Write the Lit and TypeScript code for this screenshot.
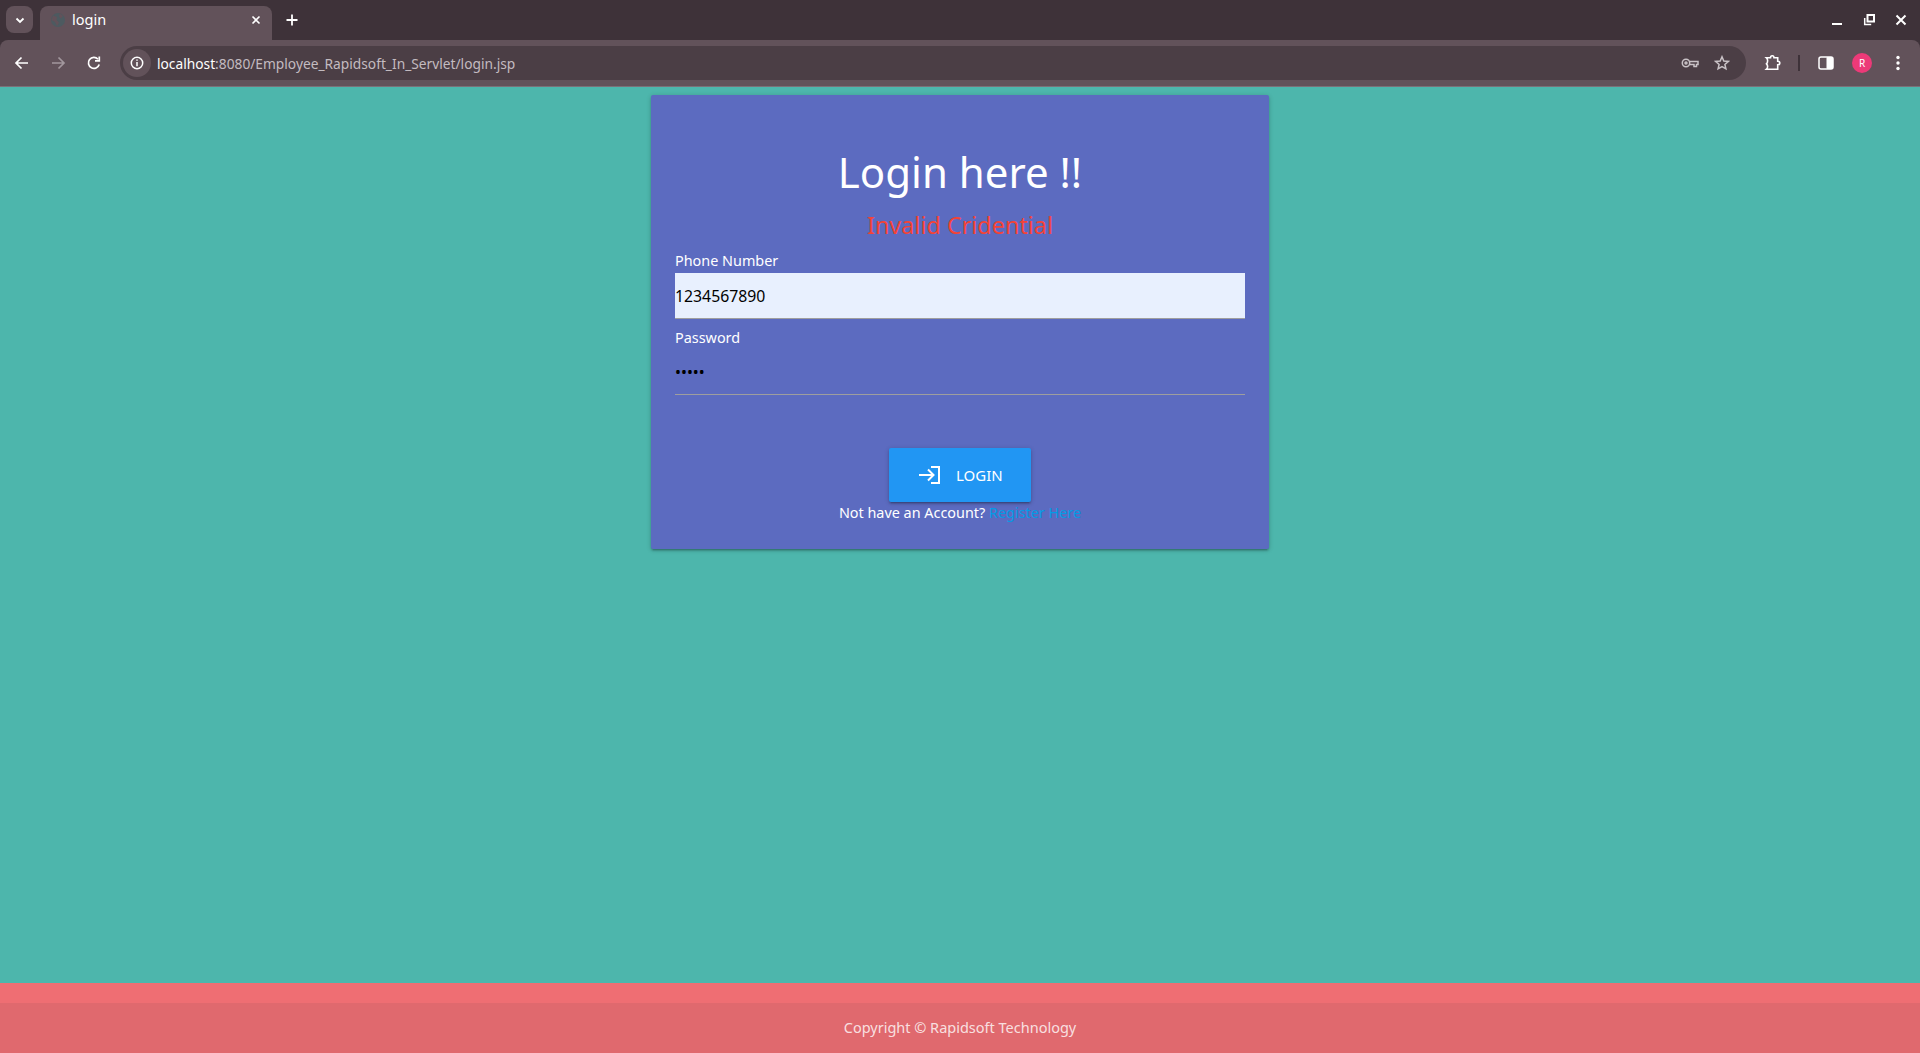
import { html, css, LitElement } from 'lit';
import { customElement } from 'lit/decorators.js';

@customElement('browser-bar')
export class BrowserBar extends LitElement {
  static styles = css`
    :host {
      display: block;
      font-family: 'Noto Sans', sans-serif;
      color: #fff;
      background-color: #3e3239;
    }

    svg {
      display: block;
      flex: none;
    }

    .tabs {
      display: flex;
      align-items: flex-end;
      height: 40px;
    }

    .tab-search {
      display: flex;
      align-items: center;
      justify-content: center;
      width: 27px;
      height: 27px;
      margin: 0 7px 7px 6px;
      border-radius: 8px;
      background-color: #62525a;
    }

    .tab {
      display: flex;
      align-items: center;
      width: 232px;
      height: 34px;
      padding: 0 10px 6px 10px;
      box-sizing: border-box;
      border-radius: 8px 8px 0 0;
      background-color: #62525a;
      font-size: 14.5px;
    }

    .tab-title {
      flex: 1;
      margin: 0 0 2px 6px;
    }

    .new-tab {
      margin-left: 13px;
      margin-bottom: 13px;
    }

    .window-controls {
      display: flex;
      align-items: center;
      gap: 20px;
      margin: 0 13px 14px auto;
    }

    .toolbar {
      display: flex;
      align-items: center;
      height: 47px;
      box-sizing: border-box;
      padding: 0 20px 0 14px;
      border-radius: 8px 8px 0 0;
      background-color: #62525a;
      border-bottom: 1px solid #7b7078;
    }

    .nav {
      display: flex;
      align-items: center;
      gap: 20px;
    }

    .omnibox {
      display: flex;
      align-items: center;
      flex: 1;
      height: 34px;
      margin: 0 18px;
      padding: 0 16px 0 3px;
      border-radius: 17px;
      background-color: #4b3e45;
    }

    .site-info {
      display: flex;
      align-items: center;
      justify-content: center;
      width: 28px;
      height: 28px;
      border-radius: 50%;
      background-color: #62525a;
    }

    .url {
      flex: 1;
      margin-left: 6px;
      font-size: 13.75px;
      color: #c3bbc0;
    }

    .url b {
      font-weight: 400;
      color: #fff;
    }

    .omni-icons {
      display: flex;
      align-items: center;
      gap: 15px;
    }

    .actions {
      display: flex;
      align-items: center;
    }

    .divider {
      width: 2px;
      height: 16px;
      margin: 0 18px 0 16px;
      background-color: #3e3239;
    }

    .avatar {
      display: flex;
      align-items: center;
      justify-content: center;
      width: 20px;
      height: 20px;
      margin: 0 24px 0 18px;
      border-radius: 50%;
      background-color: #ec3a78;
      font-size: 10px;
    }
  `;

  render() {
    return html`
      <div class="tabs">
        <div class="tab-search">
          <svg width="12" height="12" viewBox="0 0 12 12" fill="none" stroke="#fff" stroke-width="1.8">
            <path d="M2.5 4.5 6 8l3.5-3.5" />
          </svg>
        </div>
        <div class="tab">
          <svg width="16" height="16" viewBox="0 0 16 16">
            <circle cx="8" cy="8" r="7" fill="#4d5a60" />
            <path d="M3 3.5 7 5 6.5 8 9 10.5 7 14 5 10 1.5 8ZM10 1.5 13 4 10.5 6.5 9 4Z" fill="#62525a" />
          </svg>
          <span class="tab-title">login</span>
          <svg width="12" height="12" viewBox="0 0 12 12" stroke="#fff" stroke-width="1.6">
            <path d="M2.5 2.5l7 7M9.5 2.5l-7 7" />
          </svg>
        </div>
        <svg class="new-tab" width="14" height="14" viewBox="0 0 14 14" stroke="#fff" stroke-width="1.8">
          <path d="M7 1.5v11M1.500 7h11" />
        </svg>
        <div class="window-controls">
          <svg width="12" height="12" viewBox="0 0 12 12" fill="#fff"><rect x="1" y="9" width="10" height="2" /></svg>
          <svg width="12" height="12" viewBox="0 0 12 12" fill="none" stroke="#fff" stroke-width="1.5">
            <rect x="4.500" y="1" width="6.500" height="6.500" stroke-width="2" />
            <path d="M1.700 4v6.500h6.500" />
          </svg>
          <svg width="12" height="12" viewBox="0 0 12 12" stroke="#fff" stroke-width="2">
            <path d="M1.500 1.500l9 9M10.500 1.500l-9 9" />
          </svg>
        </div>
      </div>
      <div class="toolbar">
        <div class="nav">
          <svg width="16" height="16" viewBox="0 0 16 16" fill="none" stroke="#fff" stroke-width="1.700">
            <path d="M14 8H2.500M7.500 2.500 2 8l5.500 5.500" />
          </svg>
          <svg width="16" height="16" viewBox="0 0 16 16" fill="none" stroke="#a2979d" stroke-width="1.700">
            <path d="M2 8h11.500M8.500 2.500 14 8l-5.500 5.500" />
          </svg>
          <svg width="16" height="16" viewBox="0 0 16 16" fill="none" stroke="#fff" stroke-width="1.700">
            <path d="M13.200 9.500A5.500 5.500 0 1 1 12 4.200" />
            <path d="M13.300 1.500v4.300H9" />
          </svg>
        </div>
        <div class="omnibox">
          <div class="site-info">
            <svg width="14" height="14" viewBox="0 0 14 14" fill="none" stroke="#fff" stroke-width="1.500">
              <circle cx="7" cy="7" r="5.700" />
              <path d="M7 6v4.300M7 3.500v1.300" />
            </svg>
          </div>
          <span class="url"><b>localhost</b>:8080/Employee_Rapidsoft_In_Servlet/login.jsp</span>
          <div class="omni-icons">
            <svg width="18" height="12" viewBox="0 0 18 12" fill="none" stroke="#c9c2c6" stroke-width="1.500">
              <circle cx="5" cy="6" r="3.700" />
              <circle cx="5" cy="6" r="1" />
              <path d="M8.700 4.500H17v3h-1.500v2h-2.500v-2H8.700" />
            </svg>
            <svg width="16" height="16" viewBox="0 0 16 16" fill="none" stroke="#c9c2c6" stroke-width="1.500">
              <path d="M8 1.800 9.800 6l4.500.4-3.400 3 1 4.400L8 11.500l-3.900 2.300 1-4.400-3.400-3L6.200 6Z" />
            </svg>
          </div>
        </div>
        <div class="actions">
          <svg width="18" height="18" viewBox="0 0 18 18" fill="none" stroke="#fff" stroke-width="1.600">
            <path d="M2.500 3.800H6.500C6.500 1 10 1 10 3.800h3.700v3.400c2.800 0 2.800 3.600 0 3.600v4.400H2.500c1.500-1.300 1.500-4 0-5.400 1.500-1.300 1.500-4.700 0-6Z" />
          </svg>
          <div class="divider"></div>
          <svg width="16" height="16" viewBox="0 0 16 16">
            <rect x="1" y="2" width="14" height="12" rx="2" fill="none" stroke="#fff" stroke-width="1.500" />
            <rect x="8.500" y="2" width="6.500" height="12" rx="1" fill="#fff" />
          </svg>
          <div class="avatar">R</div>
          <svg width="4" height="16" viewBox="0 0 4 16" fill="#fff">
            <circle cx="2" cy="2.500" r="1.700" />
            <circle cx="2" cy="8" r="1.700" />
            <circle cx="2" cy="13.500" r="1.700" />
          </svg>
        </div>
      </div>
    `;
  }
}

@customElement('app-root')
export class AppRoot extends LitElement {
  static styles = css`
    :host {
      display: flex;
      flex-direction: column;
      height: 100vh;
      font-family: 'Noto Sans', sans-serif;
      background-color: #4db6ac;
      color: #fff;
    }

    main {
      flex: 1;
      display: flex;
      justify-content: center;
      align-items: flex-start;
      padding-top: 8px;
    }

    .card {
      width: 618px;
      height: 454px;
      box-sizing: border-box;
      padding: 24px;
      border-radius: 2px;
      background-color: #5c6bc0;
      box-shadow: 0 2px 2px 0 rgba(0, 0, 0, 0.14), 0 3px 1px -2px rgba(0, 0, 0, 0.12), 0 1px 5px 0 rgba(0, 0, 0, 0.2);
      text-align: center;
    }

    h1 {
      margin: 28px 0 0;
      font-size: 42px;
      line-height: 50px;
      font-weight: 400;
    }

    .error {
      margin: 13px 0 0;
      font-size: 23.4px;
      line-height: 30px;
      color: #f44336;
    }

    form {
      text-align: left;
    }

    label {
      display: block;
      margin-bottom: 3px;
      font-size: 14.4px;
      line-height: 18px;
    }

    .phone-label {
      margin-top: 12px;
    }

    .password-label {
      margin-top: 10px;
    }

    input {
      display: block;
      width: 100%;
      height: 46px;
      box-sizing: border-box;
      padding: 0;
      border: none;
      border-bottom: 1px solid #9e9e9e;
      outline: none;
      background: transparent;
      font-family: inherit;
      font-size: 15.8px;
      color: #000;
    }

    input.autofilled {
      background-color: #e8f0fe;
    }

    input[type='password'] {
      height: 45px;
    }

    .submit {
      display: flex;
      justify-content: center;
      margin-top: 53px;
    }

    button {
      display: flex;
      align-items: center;
      gap: 16px;
      width: 142px;
      height: 54px;
      padding: 0 0 1px 30px;
      box-sizing: border-box;
      border: none;
      border-radius: 2px;
      background-color: #2196f3;
      box-shadow: 0 2px 2px 0 rgba(0, 0, 0, 0.14), 0 3px 1px -2px rgba(0, 0, 0, 0.12), 0 1px 5px 0 rgba(0, 0, 0, 0.2);
      font-family: inherit;
      font-size: 15px;
      color: #fff;
      cursor: pointer;
    }

    .register {
      margin: 1px 0 0;
      font-size: 14.4px;
      line-height: 20px;
      text-align: center;
    }

    a {
      color: #039be5;
      text-decoration: none;
    }

    footer {
      background-color: #ef6e73;
      padding-top: 20px;
    }

    .copyright {
      height: 50px;
      box-sizing: border-box;
      padding-bottom: 2px;
      display: flex;
      align-items: center;
      justify-content: center;
      background-color: rgba(51, 51, 51, 0.08);
      font-size: 14.5px;
      color: rgba(255, 255, 255, 0.8);
    }
  `;

  render() {
    return html`
      <browser-bar></browser-bar>
      <main>
        <section class="card">
          <h1>Login here !!</h1>
          <p class="error">Invalid Cridential</p>
          <form @submit=${(e: Event) => e.preventDefault()}>
            <label class="phone-label" for="phone">Phone Number</label>
            <input class="autofilled" id="phone" type="text" value="1234567890" />
            <label class="password-label" for="password">Password</label>
            <input id="password" type="password" value="12345" />
            <div class="submit">
              <button type="submit">
                <svg width="21" height="18" viewBox="0 0 21 18" fill="none" stroke="#fff" stroke-width="2">
                  <path d="M12 1h8v16h-8M0 9h14M9 3.500 14.500 9 9 14.500" />
                </svg>
                LOGIN
              </button>
            </div>
            <p class="register">Not have an Account? <a href="#">Register Here</a></p>
          </form>
        </section>
      </main>
      <footer>
        <div class="copyright">Copyright © Rapidsoft Technology</div>
      </footer>
    `;
  }
}
